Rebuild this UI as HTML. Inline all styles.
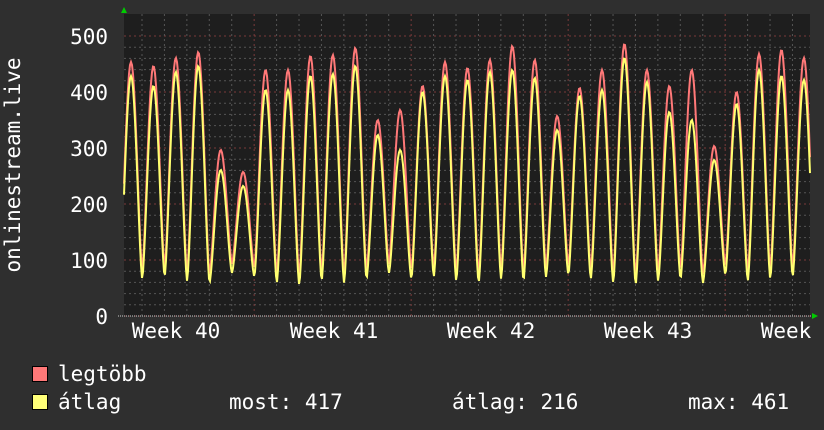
<!DOCTYPE html>
<html><head><meta charset="utf-8"><style>
body{margin:0;background:#2f2f2f;width:824px;height:430px;overflow:hidden}
svg{display:block}
text{font-family:"DejaVu Sans Mono","Liberation Mono",monospace;font-size:21px;fill:#fff}
</style></head><body>
<svg id="g" width="824" height="430" xmlns="http://www.w3.org/2000/svg">
<rect width="824" height="430" fill="#2f2f2f"/>
<rect x="124" y="14" width="686" height="302" fill="#1e1e1e"/>
<g id="grid"></g>
<polyline id="red" fill="none" stroke="#ff7878" stroke-width="2"/>
<polyline id="yel" fill="none" stroke="#ffff70" stroke-width="2"/>
<line x1="118" y1="316" x2="814" y2="316" stroke="#ccc" stroke-width="1" stroke-dasharray="1,1"/>
<polygon points="121,13 124,7 127,13" fill="#0c0"/>
<polygon points="812,313 818,316 812,319" fill="#0c0"/>
<g text-anchor="end">
<text x="108" y="44">500</text><text x="108" y="100">400</text><text x="108" y="156">300</text>
<text x="108" y="212">200</text><text x="108" y="268">100</text><text x="108" y="324">0</text>
</g>
<text transform="translate(20,165) rotate(-90)" text-anchor="middle">onlinestream.live</text>
<g text-anchor="middle">
<text x="176" y="338">Week 40</text><text x="334" y="338">Week 41</text><text x="491" y="338">Week 42</text>
<text x="648" y="338">Week 43</text><text x="805" y="338">Week 44</text>
</g>
<rect x="32.5" y="366.5" width="15" height="15" fill="#ff7878" stroke="#000"/>
<rect x="32.5" y="394.5" width="15" height="15" fill="#ffff78" stroke="#000"/>
<text x="58" y="381">legtöbb</text>
<text x="58" y="409">átlag</text>
<text x="229" y="409">most: 417</text>
<text x="452" y="409">átlag: 216</text>
<text x="688" y="409">max: 461</text>
</svg>
<script>
var g=document.getElementById('grid'),s='';
for(var v=0;v<=500;v+=20){var y=316-v*0.56;var maj=v%100==0;
s+='<line x1="124" x2="810" y1="'+y+'" y2="'+y+'" stroke="'+(maj?'#7a3a3a':'#555')+'" stroke-dasharray="2,3"/>';}
for(var x=142;x<810;x+=22.43){var wk=Math.abs(((x-254)/156.99)-Math.round((x-254)/156.99))<0.02;
s+='<line y1="14" y2="316" x1="'+x+'" x2="'+x+'" stroke="'+(wk?'#7a3a3a':'#555')+'" stroke-dasharray="2,3"/>';}
g.innerHTML=s;
var R=[62,66,58,52,150,172,70,70,56,55,48,120,110,86,62,68,60,46,60,116,88,70,44,70,86,70,146,92,54,50,58];
var Y=[76,86,72,66,170,186,90,90,76,74,66,135,150,92,76,80,72,70,78,130,96,90,58,82,112,120,160,104,70,76,80];
var TR=[270,268,272,274,264,268,274,276,272,274,270,264,270,268,272,274,270,272,268,266,270,274,276,272,270,274,266,272,270,268,270];
function val(arr,tro,off,x){var t=(x-131)/22.43;var i=Math.round(t);var ph=t-i;
i=Math.max(0,Math.min(arr.length-1,i));
var j=ph<0?i-1:i; j=Math.max(0,Math.min(30,j)); var tr=tro[j]+off;
var c=Math.cos(Math.PI*2*ph);var f=Math.pow((c+1)/2,0.75);
return tr+(arr[i]-tr)*f;}
function pts(arr,off){var p=[];for(var x=124;x<=810;x+=1){p.push(x+','+val(arr,TR,off,x).toFixed(1));}return p.join(' ');}
document.getElementById('red').setAttribute('points',pts(R,0));
document.getElementById('yel').setAttribute('points',pts(Y,9));
</script>
</body></html>
